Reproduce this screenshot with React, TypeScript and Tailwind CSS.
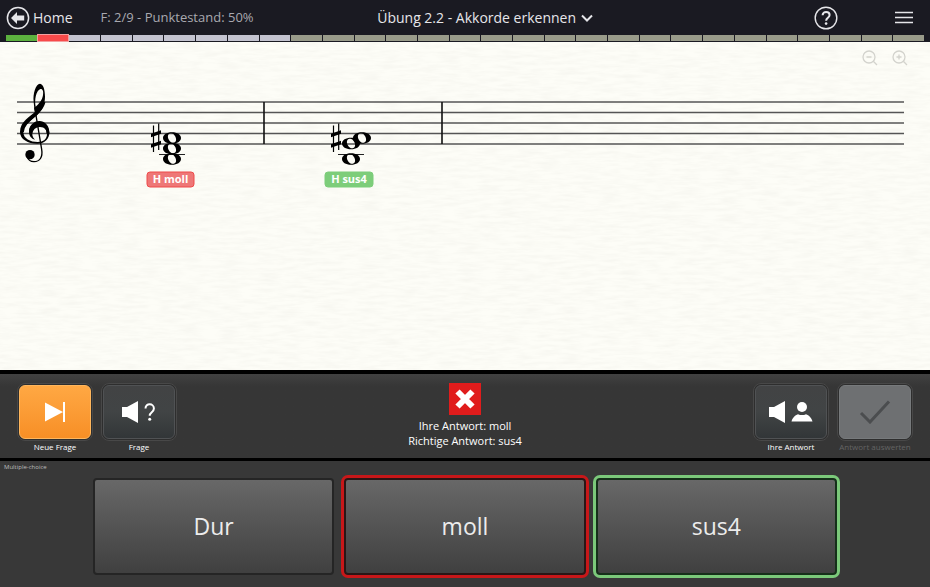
import type { ReactNode } from "react"
import { clsx } from "clsx"

const TOTAL_STEPS = 29
const OPEN_STEPS = 9

const answers = [
  { label: "Dur", state: "idle" },
  { label: "moll", state: "wrong" },
  { label: "sus4", state: "right" },
]

function stepColor(i: number) {
  if (i === 0) return "bg-[#5cb13f]"
  if (i === 1) return "bg-[#f84a4a] ring-1 ring-[#f3a0a0]"
  if (i < OPEN_STEPS) return "bg-[#c3c3cf]"
  return "bg-[#999b8a]"
}

function Header() {
  return (
    <header className="bg-[#1a1a22] text-[#e6e6ea]">
      <div className="flex h-[35px] items-center px-[6px]">
        <div className="flex w-2/5 items-center">
          <a href="#home" className="flex items-center gap-[3px] text-sm">
            <svg viewBox="0 0 24 24" className="size-6">
              <circle cx="12" cy="12" r="10.6" fill="none" stroke="currentColor" strokeWidth="1.5" />
              <path d="M5 12l6-6v3.6h7.2v4.8H11V18z" fill="currentColor" />
            </svg>
            Home
          </a>
          <p className="ml-7 text-[13px] text-[#a9a9b0]">F: 2/9 - Punktestand: 50%</p>
        </div>
        <button type="button" className="flex items-center gap-1 pl-1 text-sm">
          Übung 2.2 - Akkorde erkennen
          <svg viewBox="0 0 14 14" className="size-[14px]" fill="none" stroke="currentColor" strokeWidth="2">
            <path d="M2 4.5l5 5 5-5" />
          </svg>
        </button>
        <div className="ml-auto flex items-center gap-14 pr-[10px]">
          <button type="button" aria-label="Hilfe">
            <svg viewBox="0 0 24 24" className="size-6" fill="none" stroke="currentColor">
              <circle cx="12" cy="12" r="10.8" strokeWidth="1.4" />
              <path d="M8.6 9.2c0-4.4 7-4.2 7-.2 0 2.8-3.5 2.8-3.5 5.8" strokeWidth="2" />
              <circle cx="12.1" cy="17.6" r="1.3" fill="currentColor" stroke="none" />
            </svg>
          </button>
          <button type="button" aria-label="Menü">
            <svg viewBox="0 0 20 14" className="h-[14px] w-5" stroke="currentColor" strokeWidth="1.6">
              <path d="M1 1.5h18M1 6.5h18M1 11.5h18" />
            </svg>
          </button>
        </div>
      </div>
      <div className="flex h-[7px] gap-px px-[6px] pb-px">
        {Array.from({ length: TOTAL_STEPS }, (_, i) => (
          <span key={i} className={clsx("flex-1", stepColor(i))} />
        ))}
      </div>
    </header>
  )
}

function Paper() {
  return (
    <svg className="absolute inset-0 size-full" aria-hidden="true">
      <filter id="paper" x="0" y="0" width="100%" height="100%">
        <feTurbulence type="fractalNoise" baseFrequency="0.05 0.3" numOctaves="3" seed="4" />
        <feColorMatrix values="0 0 0 0 0.7  0 0 0 0 0.69  0 0 0 0 0.64  0.34 0 0 0 -0.12" />
      </filter>
      <rect width="100%" height="100%" filter="url(#paper)" />
    </svg>
  )
}

function Clef() {
  return (
    <g transform="translate(0 28) scale(0.33333)">
      <path
        fillRule="evenodd"
        d="M105 126C93 138 60 153 60 186C60 208 84 221 112 221C137 221 149 203 148 186C147 165 134 153 118 153C100 153 87 168 87 185C87 197 94 206 105 209C96 200 95 190 100 182C104 175 111 171 120 171C134 171 141 181 141 192C141 207 130 216 113 216C91 216 70 206 70 186C70 164 93 151 112 134C128 119 135 101 135 80C135 60 130 42 120 41C107 42 98 72 101 95C102 106 103 115 105 126ZM107 110C103 89 108 63 121 57C128 56 131 64 129 75C127 90 118 100 107 110Z"
      />
      <path d="M67 186C67 164 90 148 110 130C122 119 129 108 132 96" fill="none" stroke="#000" strokeWidth="9" />
      <path d="M93 190C88 170 105 160 118 160C134 160 143 174 144 190" fill="none" stroke="#000" strokeWidth="9" />
      <path d="M104 112L125 238C129 262 119 275 102 275C92 275 84 269 81 259" fill="none" stroke="#000" strokeWidth="4" />
      <circle cx="90" cy="254" r="14" />
    </g>
  )
}

function WholeNote({ x, y }: { x: number; y: number }) {
  return (
    <g transform={`translate(${x} ${y})`}>
      <path
        fillRule="evenodd"
        d="M0-5.8C5.2-5.8 9-3.4 9 0S5.2 5.8 0 5.8-9 3.4-9 0-5.2-5.8 0-5.8ZM-1.4-4.8C-4.4-4.2-4.6-1.2-3.3 1.4-2 4 .3 5.2 1.9 4.7 4.6 4 4.5 1 3.3-1.5 2.1-3.9.4-5.1-1.4-4.8Z"
      />
    </g>
  )
}

function Sharp({ x, y }: { x: number; y: number }) {
  return (
    <g transform={`translate(${x} ${y})`}>
      <path d="M-2.5-12.5V14M2.7-14.5V12" stroke="#000" strokeWidth="1.2" />
      <path d="M-5-4.3L5-7.8V-4.2L-5-.7ZM-5 6.2L5 2.7V6.3L-5 9.8Z" />
    </g>
  )
}

type TagProps = { x: number; width: number; fill: string; stroke: string; children: string }

function Tag({ x, width, fill, stroke, children }: TagProps) {
  return (
    <g>
      <rect x={x} y="130" width={width} height="15" rx="3" fill={fill} stroke={stroke} />
      <text x={x + width / 2} y="141" textAnchor="middle" fill="#fff" fontSize="11" fontWeight="700">
        {children}
      </text>
    </g>
  )
}

function Score() {
  return (
    <svg viewBox="0 0 930 160" className="relative block w-full" role="img" aria-label="Akkorde H moll und H sus4">
      <path d="M17 60H904M17 70.5H904M17 81H904M17 91.5H904M17 102H904" stroke="#555" strokeWidth="1.4" />
      <path d="M264 60V102M442 60V102" stroke="#111" strokeWidth="1.6" />
      <Clef />
      <path d="M159 112.5H185M338 112.5H364" stroke="#222" strokeWidth="1" />

      {/* H moll */}
      <Sharp x={156} y={96} />
      <WholeNote x={172} y={96} />
      <WholeNote x={172} y={106.5} />
      <WholeNote x={172} y={117} />
      <Tag x={147} width={47} fill="#ee7777" stroke="#ee4b4b">H moll</Tag>

      {/* H sus4 */}
      <Sharp x={336} y={96} />
      <WholeNote x={362} y={96} />
      <WholeNote x={351} y={101.5} />
      <WholeNote x={351} y={117} />
      <Tag x={325} width={48} fill="#7dcd7a" stroke="#7dcd7a">H sus4</Tag>
    </svg>
  )
}

function ZoomIcon({ plus }: { plus?: boolean }) {
  return (
    <svg viewBox="0 0 16 16" className="size-4" fill="none" stroke="currentColor" strokeWidth="1.3">
      <circle cx="7" cy="7" r="6" />
      <path d="M11.3 11.3L15 15M4.5 7h5" />
      {plus && <path d="M7 4.5v5" />}
    </svg>
  )
}

type ToolButtonProps = {
  label: string
  variant?: "dark" | "orange"
  disabled?: boolean
  children: ReactNode
}

function ToolButton({ label, variant = "dark", disabled, children }: ToolButtonProps) {
  return (
    <button
      type="button"
      disabled={disabled}
      className={clsx("flex w-[76px] flex-col items-center text-[8px] leading-3", disabled ? "text-[#646464]" : "text-white")}
    >
      <span className="w-full rounded-lg border border-[#484848] bg-[#2e2e2e] p-px">
        <span
          className={clsx(
            "flex h-[54px] items-center justify-center rounded-md border",
            disabled && "border-[#777a7c] bg-[#6e7072]",
            !disabled && variant === "orange" && "border-[#ffb65c] bg-linear-to-b from-[#ffa843] to-[#f78f25]",
            !disabled && variant === "dark" && "border-[#505254] bg-linear-to-b from-[#424344] via-[#414445] to-[#323638]"
          )}
        >
          {children}
        </span>
      </span>
      <span className="whitespace-nowrap">{label}</span>
    </button>
  )
}

function Toolbar() {
  return (
    <section className="flex items-start justify-between border-t-4 border-b-3 border-black bg-linear-to-b from-[#414141] to-[#363636] to-15% px-[17px] pt-[9px] pb-[5px]">
      <div className="flex gap-2">
        <ToolButton label="Neue Frage" variant="orange">
          <svg viewBox="0 0 22 22" className="size-[22px]" fill="#fff">
            <path d="M1 1.5L19 11 1 20.5zM19 1h2v20h-2z" />
          </svg>
        </ToolButton>
        <ToolButton label="Frage">
          <svg viewBox="0 0 34 22" className="h-[22px] w-[34px]" fill="#fff">
            <path d="M0 6h5L16 0v22L5 16H0z" />
            <path d="M23.5 7.5c0-5.8 8.4-5.3 8.4 0 0 3.8-4.2 3.5-4.2 7.2" fill="none" stroke="#fff" strokeWidth="2" />
            <circle cx="27.7" cy="18.3" r="1.5" />
          </svg>
        </ToolButton>
      </div>

      <div className="flex flex-col items-center text-center text-[11px] leading-[15px] text-white">
        <svg viewBox="0 0 32 32" className="mb-[3px] size-8">
          <rect width="32" height="32" fill="#e01c1c" />
          <path d="M8.5 8.5L23.5 23.5M23.5 8.5L8.5 23.5" stroke="#fff" strokeWidth="6" />
        </svg>
        <p>Ihre Antwort: moll</p>
        <p>Richtige Antwort: sus4</p>
      </div>

      <div className="flex gap-2">
        <ToolButton label="Ihre Antwort">
          <svg viewBox="0 0 44 22" className="h-[22px] w-11" fill="#fff">
            <path d="M0 6h5L16 0v22L5 16H0z" />
            <circle cx="33" cy="6" r="5" />
            <path d="M22.5 20.5c.8-3.5 3.5-6.5 6.5-7.3 2.5 1.2 5.5 1.2 8 0 3 .8 5.7 3.8 6.5 7.3z" />
          </svg>
        </ToolButton>
        <ToolButton label="Antwort auswerten" disabled>
          <svg viewBox="0 0 32 24" className="h-6 w-8" fill="none" stroke="#4b4d4f" strokeWidth="3">
            <path d="M2 13L11 22 30 1.5" />
          </svg>
        </ToolButton>
      </div>
    </section>
  )
}

function Answers() {
  return (
    <section className="bg-[#383838] pb-3">
      <h2 className="px-1 pt-px text-[6px] leading-[10px] text-[#bdbdbd]">Multiple-choice</h2>
      <div className="mx-auto mt-[6px] grid w-4/5 grid-cols-3 gap-[10px]">
        {answers.map(({ label, state }) => (
          <button
            key={label}
            type="button"
            className={clsx(
              "h-[97px] rounded-sm border-2 bg-linear-to-b from-[#686868] to-[#404040] text-[23px] text-[#ececec]",
              state === "idle" && "border-[#252525]",
              state === "wrong" && "border-[#2b1616] outline-3 outline-[#c81719]",
              state === "right" && "border-[#16301a] outline-3 outline-[#7bc97a]"
            )}
          >
            {label}
          </button>
        ))}
      </div>
    </section>
  )
}

export default function App() {
  return (
    <div className="flex min-h-screen flex-col bg-[#383838] font-['Open_Sans','Noto_Sans',sans-serif]">
      <Header />
      <main className="flex flex-1 flex-col">
        <section className="relative flex-1 bg-[#fdfdf7]">
          <Paper />
          <Score />
          <div className="absolute top-2 right-[22px] flex gap-[14px] text-[#d3d3cd]">
            <button type="button" aria-label="Verkleinern">
              <ZoomIcon />
            </button>
            <button type="button" aria-label="Vergrößern">
              <ZoomIcon plus />
            </button>
          </div>
        </section>
        <Toolbar />
        <Answers />
      </main>
    </div>
  )
}
